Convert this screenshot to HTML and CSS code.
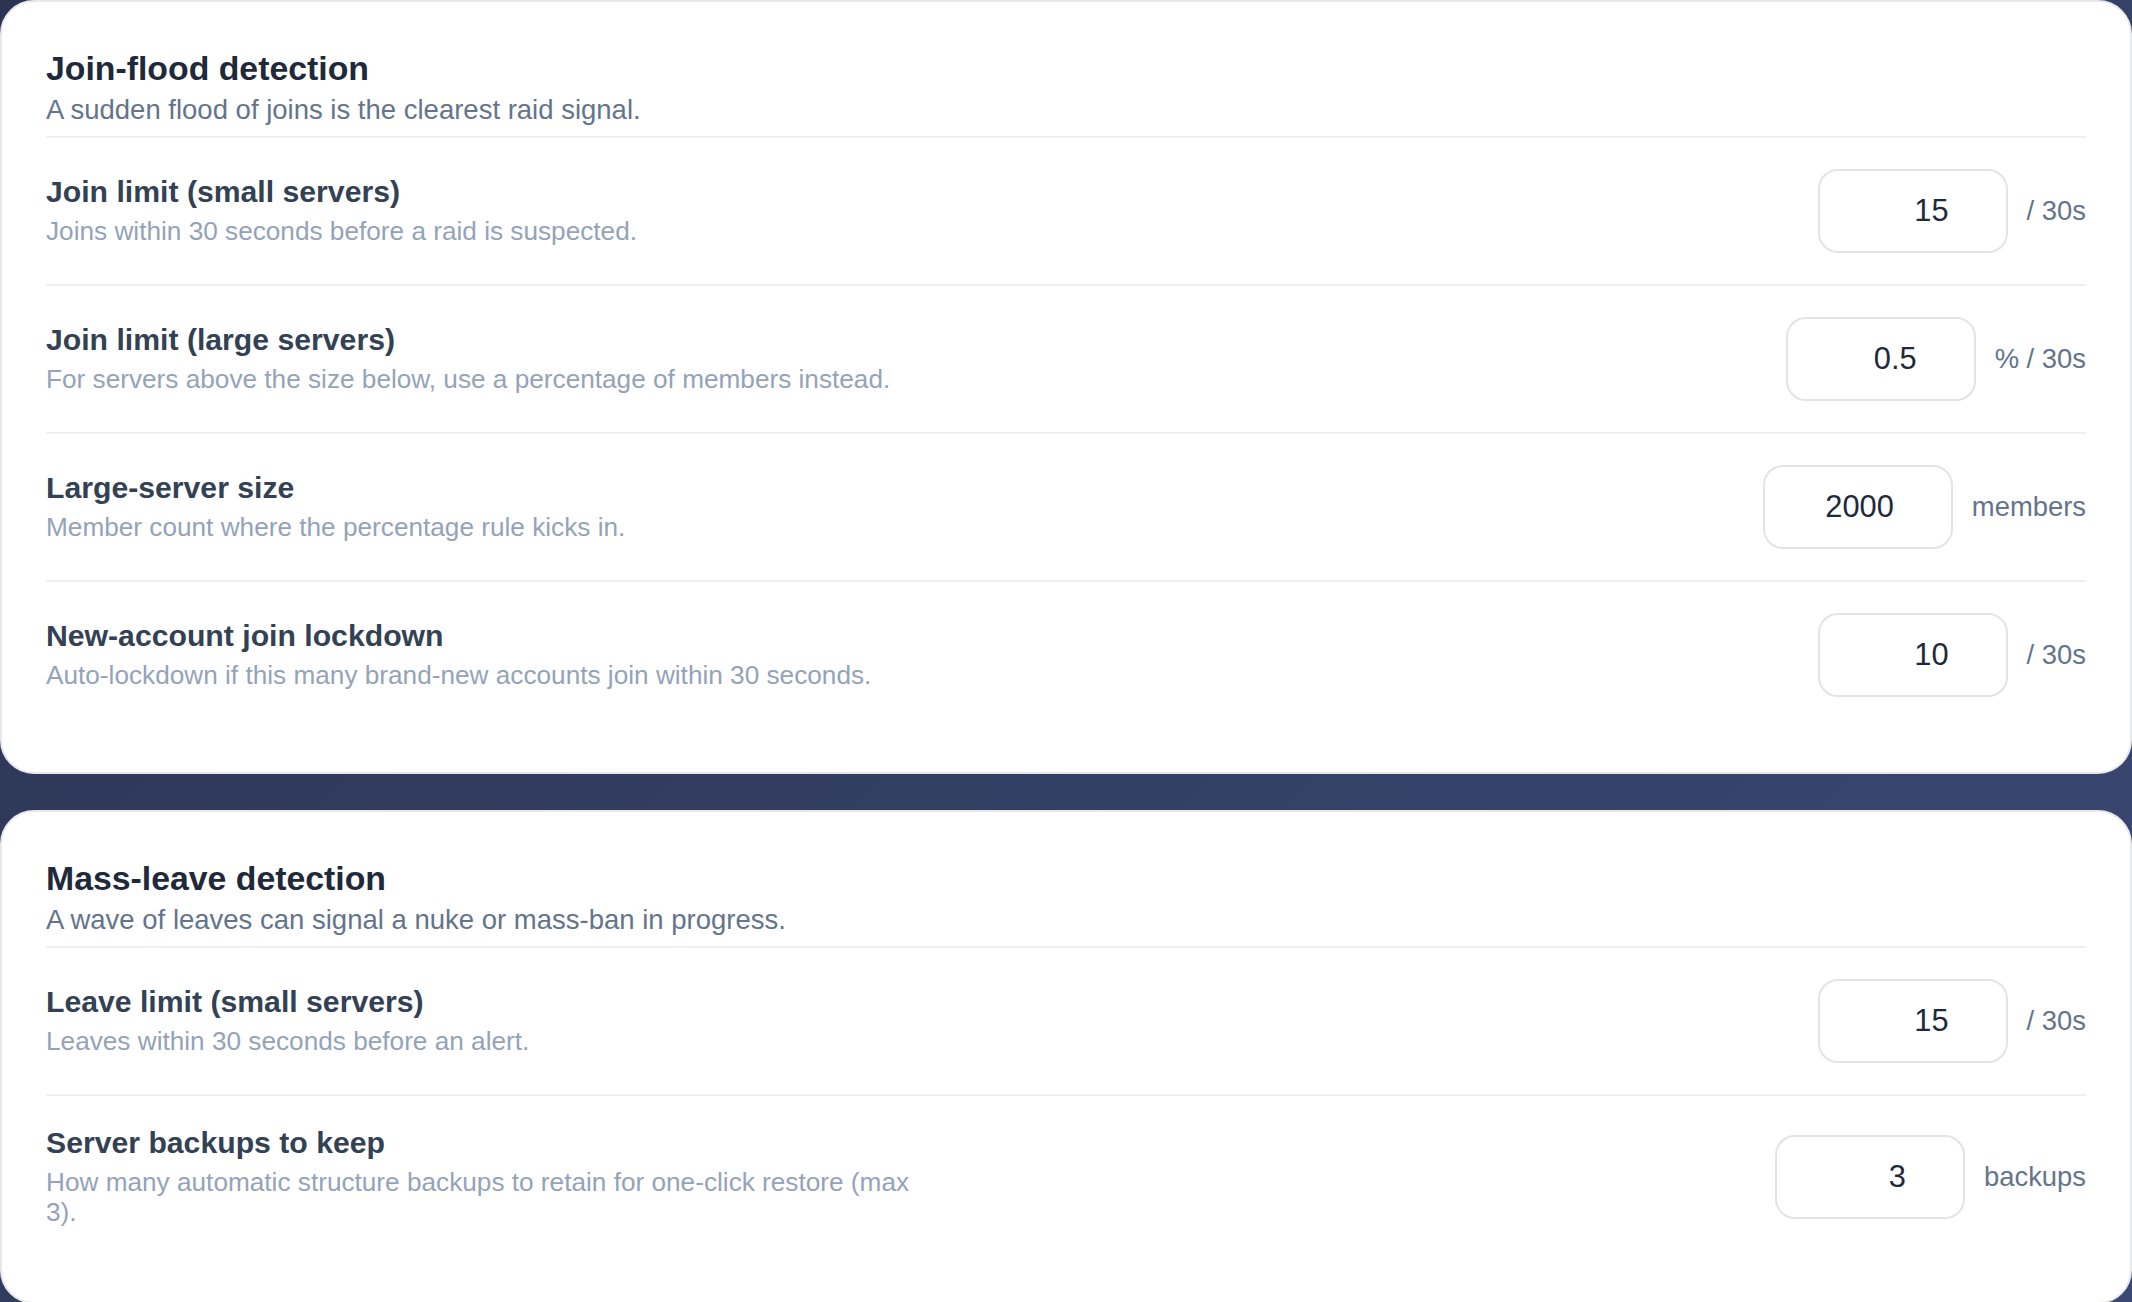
FILE: index.html
```html
<!DOCTYPE html>
<html>

<head>
    <title>Anti-raid settings</title>
    <link rel="stylesheet" href="styles.css">
</head>

<body>
    <div class="settings-page">

        <section class="card">
            <div class="card-header">
                <h3 class="card-title">Join-flood detection</h3>
                <p class="card-subtitle">A sudden flood of joins is the clearest raid signal.</p>
            </div>

            <div class="setting-row">
                <div class="setting-text">
                    <label class="setting-label" for="joinLimitSmall">Join limit (small servers)</label>
                    <p class="setting-desc">Joins within 30 seconds before a raid is suspected.</p>
                </div>
                <div class="setting-control">
                    <input type="number" id="joinLimitSmall" value="15">
                    <span class="setting-unit">/ 30s</span>
                </div>
            </div>

            <div class="setting-row">
                <div class="setting-text">
                    <label class="setting-label" for="joinLimitLarge">Join limit (large servers)</label>
                    <p class="setting-desc">For servers above the size below, use a percentage of members instead.</p>
                </div>
                <div class="setting-control">
                    <input type="number" id="joinLimitLarge" value="0.5" step="0.1">
                    <span class="setting-unit">% / 30s</span>
                </div>
            </div>

            <div class="setting-row">
                <div class="setting-text">
                    <label class="setting-label" for="largeServerSize">Large-server size</label>
                    <p class="setting-desc">Member count where the percentage rule kicks in.</p>
                </div>
                <div class="setting-control">
                    <input type="number" id="largeServerSize" value="2000">
                    <span class="setting-unit">members</span>
                </div>
            </div>

            <div class="setting-row">
                <div class="setting-text">
                    <label class="setting-label" for="newAccountLockdown">New-account join lockdown</label>
                    <p class="setting-desc">Auto-lockdown if this many brand-new accounts join within 30 seconds.</p>
                </div>
                <div class="setting-control">
                    <input type="number" id="newAccountLockdown" value="10">
                    <span class="setting-unit">/ 30s</span>
                </div>
            </div>
        </section>

        <section class="card">
            <div class="card-header">
                <h3 class="card-title">Mass-leave detection</h3>
                <p class="card-subtitle">A wave of leaves can signal a nuke or mass-ban in progress.</p>
            </div>

            <div class="setting-row">
                <div class="setting-text">
                    <label class="setting-label" for="leaveLimitSmall">Leave limit (small servers)</label>
                    <p class="setting-desc">Leaves within 30 seconds before an alert.</p>
                </div>
                <div class="setting-control">
                    <input type="number" id="leaveLimitSmall" value="15">
                    <span class="setting-unit">/ 30s</span>
                </div>
            </div>

            <div class="setting-row">
                <div class="setting-text">
                    <label class="setting-label" for="backupsToKeep">Server backups to keep</label>
                    <p class="setting-desc">How many automatic structure backups to retain for one-click restore (max 3).</p>
                </div>
                <div class="setting-control">
                    <input type="number" id="backupsToKeep" value="3" min="1" max="3">
                    <span class="setting-unit">backups</span>
                </div>
            </div>
        </section>

    </div>
</body>

</html>
```

FILE: styles.css
```css
:root {
    --bg-start: #2b3452;
    --bg-end: #3b4874;
    --card-bg: #fff;
    --card-border: #e6e8ec;
    --divider: #efefef;
    --title-color: #1e293b;
    --label-color: #334155;
    --text-secondary: #64748b;
    --text-muted: #94a3b8;
    --input-border: #e3e4e7;
}

* {
    box-sizing: border-box;
    margin: 0;
    padding: 0;
}

body {
    min-height: 100vh;
    font-family: "Liberation Sans", Arial, sans-serif;
    background: linear-gradient(135deg, var(--bg-start) 0%, var(--bg-end) 100%);
    color: var(--title-color);
}

.settings-page {
    display: flex;
    flex-direction: column;
    gap: 36px;
}

.card {
    background: var(--card-bg);
    border: 2px solid var(--card-border);
    border-radius: 34px;
    padding: 45px 44px 44px;
}

.card-header {
    padding-bottom: 9px;
    border-bottom: 2px solid var(--divider);
}

.card-title {
    font-size: 33.8px;
    line-height: 42px;
    font-weight: 700;
    color: var(--title-color);
}

.card-subtitle {
    margin-top: 4px;
    font-size: 27.5px;
    line-height: 34px;
    color: var(--text-secondary);
}

/* one setting: text on the left, number box + unit on the right */
.setting-row {
    display: flex;
    align-items: center;
    justify-content: space-between;
    gap: 40px;
    padding: 31px 0;
    border-bottom: 2px solid var(--divider);
}

.setting-row:last-child {
    border-bottom: none;
}

.setting-text {
    max-width: 880px;
}

.setting-label {
    display: block;
    font-size: 30.2px;
    line-height: 31px;
    font-weight: 700;
    color: var(--label-color);
}

.setting-desc {
    margin-top: 9px;
    font-size: 26.2px;
    line-height: 30px;
    color: var(--text-muted);
}

.setting-control {
    display: flex;
    align-items: center;
    gap: 19px;
    flex-shrink: 0;
}

.setting-control input {
    width: 190px;
    height: 84px;
    padding: 0 57px 0 16px;
    border: 2px solid var(--input-border);
    border-radius: 20px;
    background: #fff;
    font-family: inherit;
    font-size: 30.8px;
    color: var(--title-color);
    text-align: right;
    -moz-appearance: textfield;
}

.setting-control input:focus {
    outline: none;
    border-color: #a5b4fc;
}

.setting-control input::-webkit-inner-spin-button,
.setting-control input::-webkit-outer-spin-button {
    -webkit-appearance: none;
    margin: 0;
}

.setting-unit {
    font-size: 27.4px;
    color: var(--text-secondary);
    white-space: nowrap;
}
```
